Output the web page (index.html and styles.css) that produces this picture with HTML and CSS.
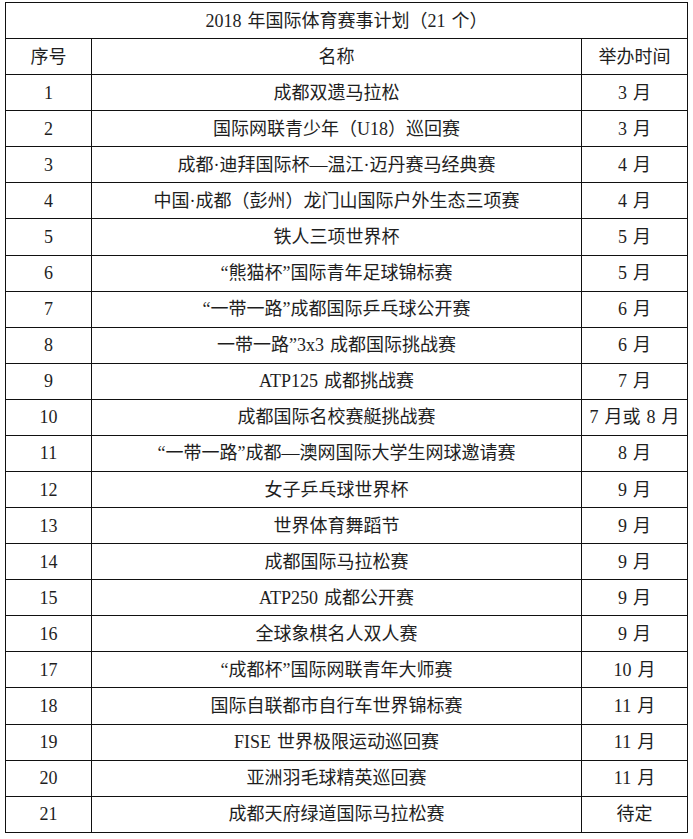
FILE: index.html
```html
<!DOCTYPE html>
<html lang="zh-CN">
<head>
<meta charset="utf-8">
<title>2018年国际体育赛事计划</title>
<link rel="stylesheet" href="styles.css">
</head>
<body>
<table class="plan">
  <colgroup>
    <col class="c-no">
    <col class="c-name">
    <col class="c-time">
  </colgroup>
  <thead>
    <tr><th colspan="3" class="title">2018 年国际体育赛事计划（21 个）</th></tr>
    <tr><th>序号</th><th>名称</th><th>举办时间</th></tr>
  </thead>
  <tbody>
    <tr><td>1</td><td>成都双遗马拉松</td><td>3 月</td></tr>
    <tr><td>2</td><td>国际网联青少年（U18）巡回赛</td><td>3 月</td></tr>
    <tr><td>3</td><td>成都·迪拜国际杯—温江·迈丹赛马经典赛</td><td>4 月</td></tr>
    <tr><td>4</td><td>中国·成都（彭州）龙门山国际户外生态三项赛</td><td>4 月</td></tr>
    <tr><td>5</td><td>铁人三项世界杯</td><td>5 月</td></tr>
    <tr><td>6</td><td>“熊猫杯”国际青年足球锦标赛</td><td>5 月</td></tr>
    <tr><td>7</td><td>“一带一路”成都国际乒乓球公开赛</td><td>6 月</td></tr>
    <tr><td>8</td><td>一带一路”3x3 成都国际挑战赛</td><td>6 月</td></tr>
    <tr><td>9</td><td>ATP125 成都挑战赛</td><td>7 月</td></tr>
    <tr><td>10</td><td>成都国际名校赛艇挑战赛</td><td>7 月或 8 月</td></tr>
    <tr><td>11</td><td>“一带一路”成都—澳网国际大学生网球邀请赛</td><td>8 月</td></tr>
    <tr><td>12</td><td>女子乒乓球世界杯</td><td>9 月</td></tr>
    <tr><td>13</td><td>世界体育舞蹈节</td><td>9 月</td></tr>
    <tr><td>14</td><td>成都国际马拉松赛</td><td>9 月</td></tr>
    <tr><td>15</td><td>ATP250 成都公开赛</td><td>9 月</td></tr>
    <tr><td>16</td><td>全球象棋名人双人赛</td><td>9 月</td></tr>
    <tr><td>17</td><td>“成都杯”国际网联青年大师赛</td><td>10 月</td></tr>
    <tr><td>18</td><td>国际自联都市自行车世界锦标赛</td><td>11 月</td></tr>
    <tr><td>19</td><td>FISE 世界极限运动巡回赛</td><td>11 月</td></tr>
    <tr><td>20</td><td>亚洲羽毛球精英巡回赛</td><td>11 月</td></tr>
    <tr><td>21</td><td>成都天府绿道国际马拉松赛</td><td>待定</td></tr>
  </tbody>
</table>
</body>
</html>
```
FILE: styles.css
```css
html, body {
  margin: 0;
  background: #ffffff;
}
body {
  padding: 2px 0 0 5px;
  font-family: "Liberation Serif", "Noto Sans CJK SC", serif;
  font-size: 18px;
  color: #1e1e1e;
}
.plan {
  border-collapse: collapse;
  width: 682px;
  table-layout: fixed;
}
.c-no { width: 86px; }
.c-name { width: 490px; }
.c-time { width: 106px; }
.plan th,
.plan td {
  border: 1px solid #111;
  height: 35.09px;
  padding: 0;
  text-align: center;
  vertical-align: middle;
  font-weight: normal;
  line-height: 20px;
  white-space: nowrap;
  word-spacing: 1.5px;
}
```
